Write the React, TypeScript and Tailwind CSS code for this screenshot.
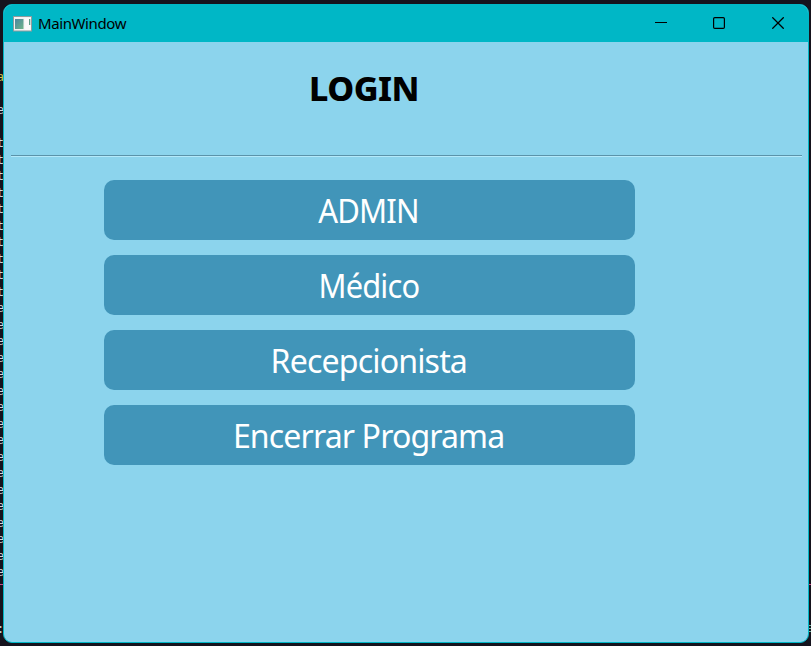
const leftRows: string[] = [
  "a", "", "e", "",
  ...Array<string>(10).fill("t"),
  ...Array<string>(17).fill("e"),
];

const actions = [
  { label: "ADMIN", fit: "scale-x-[0.94]" },
  { label: "Médico", fit: "scale-x-[0.935]" },
  { label: "Recepcionista", fit: "scale-x-[0.974]" },
  { label: "Encerrar Programa", fit: "scale-x-[0.972]" },
];

function TerminalLeft() {
  return (
    <div className="flex h-full w-[3px] shrink-0 flex-col overflow-hidden pt-[70px] font-['Liberation_Mono',monospace] text-[12px] leading-[16.5px] text-[#d4d4dc]">
      {leftRows.map((c, i) => (
        <div key={i} className={`-ml-[3px] h-[16.5px] shrink-0 ${i === 0 ? "text-[#cfc34c]" : ""}`}>
          {c}
        </div>
      ))}
      <div className="mt-[2.5px] h-px shrink-0 bg-[#c64d8c]" />
      <div className="mt-[37px] -ml-[3px] h-[16.5px] shrink-0">:</div>
    </div>
  );
}

function TerminalRight() {
  return (
    <div className="flex h-full w-[2px] shrink-0 flex-col overflow-hidden pt-[584px]">
      <div className="h-px shrink-0 bg-[#c64d8c]" />
      <div className="mt-[40px] flex flex-col gap-[2px]">
        <div className="h-px bg-[#74b8a5]" />
        <div className="h-px bg-[#74b8a5]" />
        <div className="h-px bg-[#74b8a5]" />
      </div>
    </div>
  );
}

function AppIcon() {
  return (
    <svg width="20" height="16" viewBox="0 0 20 16" className="shrink-0">
      <defs>
        <linearGradient id="pane" x1="0" y1="0" x2="1" y2="1">
          <stop offset="0" stopColor="#4a85a0" />
          <stop offset="1" stopColor="#6fb58a" />
        </linearGradient>
      </defs>
      <rect x="0.5" y="0.5" width="18" height="14.5" fill="#f2f2f2" stroke="#8d9b9e" />
      <rect x="2" y="3" width="8.5" height="10" fill="url(#pane)" />
      <rect x="11.5" y="2" width="6" height="12" fill="#fafafa" />
      <rect x="16" y="3" width="1.3" height="6" fill="#5d9c86" />
    </svg>
  );
}

function TitleBar() {
  return (
    <div className="flex h-[37px] shrink-0 items-center bg-[#00b7c6] pl-[9px]">
      <AppIcon />
      <span className="mb-[2px] ml-[5px] font-['Noto_Sans',sans-serif] text-[15px] leading-5 tracking-[-0.4px] text-black">
        MainWindow
      </span>
      <div className="mb-px ml-auto flex items-center gap-[46px] pr-[24px]">
        <svg width="12" height="12" viewBox="0 0 12 12" shapeRendering="crispEdges">
          <rect x="0" y="5" width="12" height="1" fill="#000" />
        </svg>
        <svg width="12" height="12" viewBox="0 0 12 12">
          <rect x="0.6" y="0.6" width="10.8" height="10.8" rx="1.2" fill="none" stroke="#000" strokeWidth="1.2" />
        </svg>
        <svg width="13" height="12" viewBox="0 0 13 12">
          <path d="M1.3 .3l11.4 11.4M12.7 .3L1.3 11.7" stroke="#000" strokeWidth="1.3" />
        </svg>
      </div>
    </div>
  );
}

export default function App() {
  return (
    <div className="flex h-[646px] w-[811px] overflow-hidden bg-[#15131d]">
      <TerminalLeft />
      <main className="mt-1 flex h-[639px] w-[806px] shrink-0 flex-col overflow-hidden rounded-[9px] border border-[#00b7c6] bg-[#8cd4ed]">
        <TitleBar />
        <h1 className="ml-[305px] mt-[24px] h-[46px] origin-left scale-x-[1.03] self-start font-['Noto_Sans',sans-serif] text-[33px] font-extrabold leading-[46px] tracking-[-0.5px] text-black">
          LOGIN
        </h1>
        <div className="ml-[7px] mr-[6px] mt-[43px] h-[2px] shrink-0 border-t border-[#5b93aa] bg-[#b4e9fa]" />
        <div className="ml-[100px] mt-[23px] flex w-[531px] flex-col gap-[15px]">
          {actions.map(({ label, fit }) => (
            <button
              key={label}
              type="button"
              className="flex h-[60px] items-center justify-center rounded-[10px] bg-[#4195b9] pr-[2px] pt-[1px] font-['Noto_Sans',sans-serif] text-[33px] leading-[46px] tracking-[-0.9px] text-white"
            >
              <span className={fit}>{label}</span>
            </button>
          ))}
        </div>
      </main>
      <TerminalRight />
    </div>
  );
}
